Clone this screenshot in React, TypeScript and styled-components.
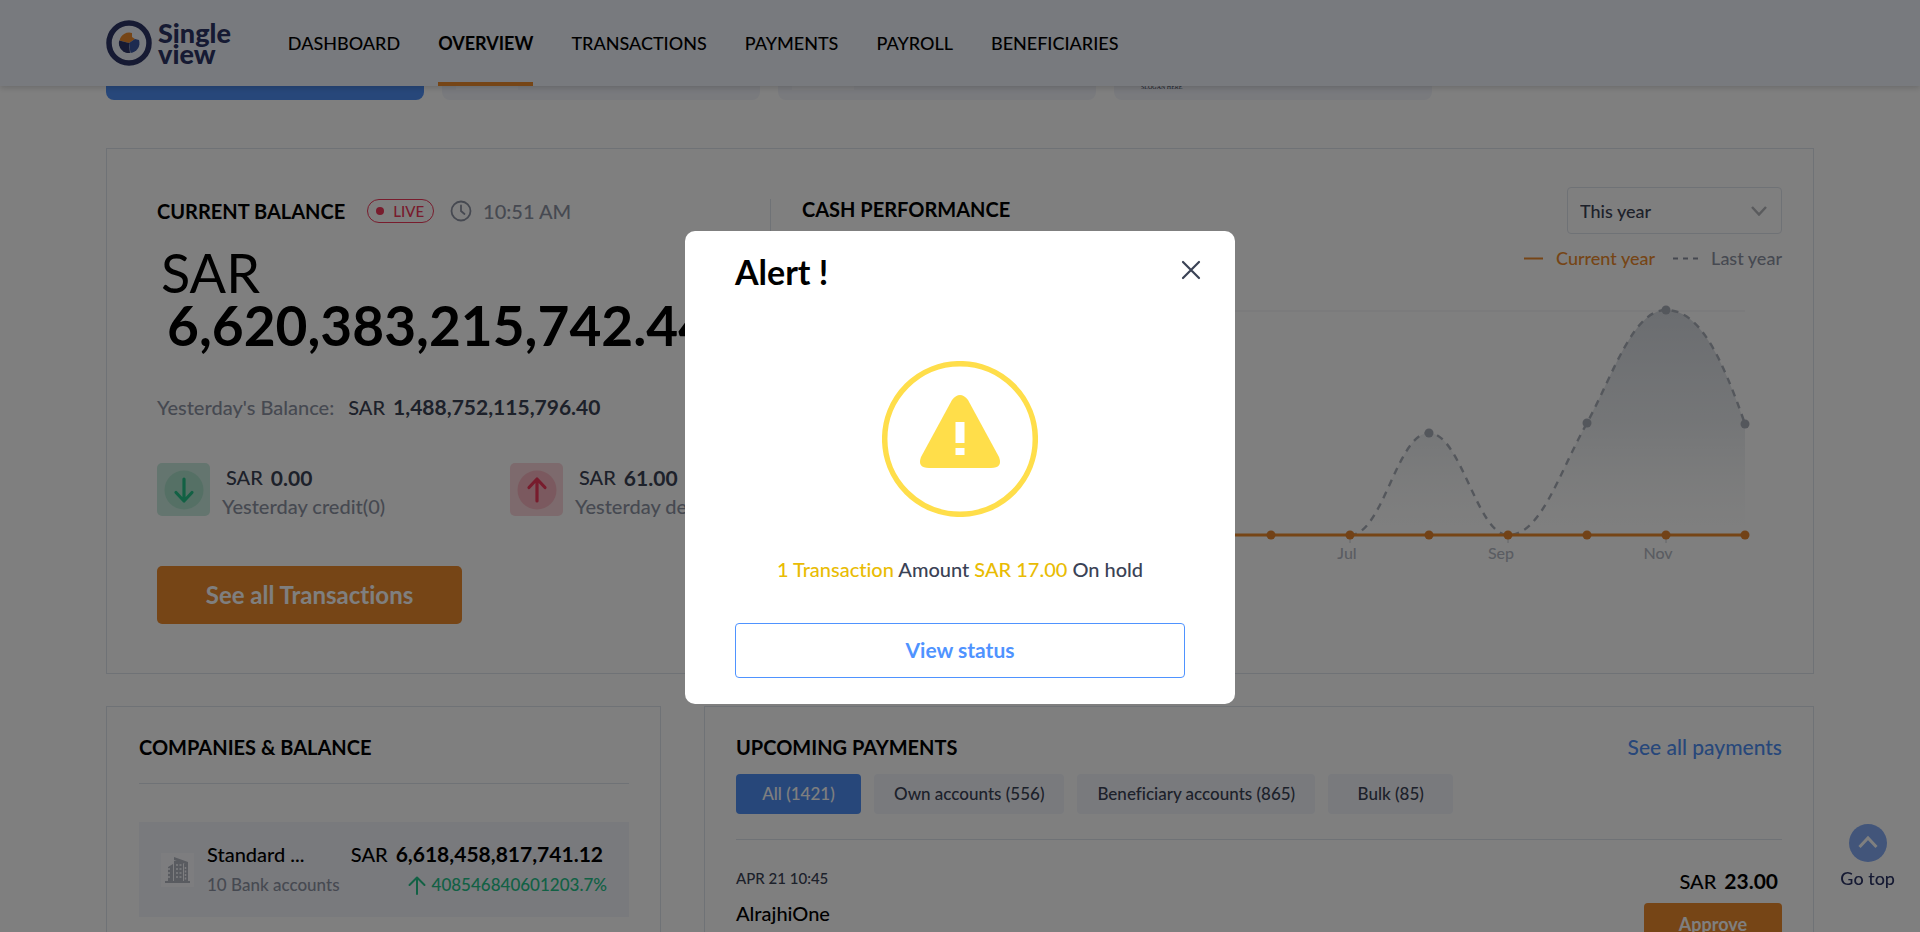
import React from 'react';
import styled, { createGlobalStyle } from 'styled-components';

const c = {
  ink: '#000000',
  slate: '#3a4255',
  muted: '#8d93a3',
  line: '#dfe4ec',
  tint: '#f2f4fb',
  blue: '#4f8ff5',
  orange: '#ec8a2d',
  green: '#25c289',
  red: '#f0385a',
  navy: '#2c3566',
};

const GlobalStyle = createGlobalStyle`
  *, *::before, *::after { box-sizing: border-box; }
  body {
    margin: 0;
    background: #fff;
    color: ${c.ink};
    font-family: Lato, "Liberation Sans", sans-serif;
    font-size: 20px;
    font-weight: 500;
    line-height: 24px;
    font-variant-ligatures: none;
  }
  h1, h2, p { margin: 0; }
  button, select { font: inherit; color: inherit; font-variant-ligatures: inherit; }
  button { cursor: pointer; }
  a { text-decoration: none; }
`;

const Header = styled.header`
  position: sticky;
  top: 0;
  z-index: 2;
  display: flex;
  align-items: center;
  gap: 57px;
  height: 86px;
  padding: 0 106px;
  background: #f1f5fc;
  box-shadow: 0 2px 6px rgba(0, 0, 0, 0.16);
`;

const Brand = styled.a`
  display: flex;
  align-items: center;
  gap: 6px;
  color: ${c.navy};
  font-size: 27px;
  font-weight: 900;
  line-height: 21px;
`;

const BrandName = styled.span`
  display: flex;
  flex-direction: column;
`;

const Nav = styled.nav`
  display: flex;
  gap: 38px;
  height: 100%;
`;

const NavLink = styled.a<{ $active?: boolean }>`
  display: flex;
  align-items: center;
  padding-top: 3px;
  color: ${c.ink};
  font-size: 18px;
  font-weight: ${(p) => (p.$active ? 700 : 500)};
  border-bottom: 4px solid ${(p) => (p.$active ? c.orange : 'transparent')};
`;

const Main = styled.main`
  margin-top: -18px;
  padding: 0 106px 60px;
`;

const CompanyStrip = styled.div`
  display: flex;
  gap: 18px;
`;

const CompanyCard = styled.div<{ $active?: boolean }>`
  width: 318px;
  height: 32px;
  padding: 0 14px;
  border-radius: 0 0 8px 8px;
  background: ${(p) => (p.$active ? c.blue : c.tint)};
`;

const CardLogo = styled.div`
  width: 62px;
  height: 22px;
  background: #f9fafe;
`;

const Slogan = styled.div`
  padding: 15px 13px 0;
  color: ${c.slate};
  font: 6px/8px "Liberation Serif", serif;
`;

const Panel = styled.section`
  border: 1px solid ${c.line};
`;

const BalancePanel = styled(Panel)`
  display: grid;
  grid-template-columns: 613px 1fr;
  margin-top: 48px;
  height: 526px;
`;

const BalanceColumn = styled.div`
  padding: 50px 0 0 50px;
  min-width: 0;
`;

const Title = styled.h2`
  font-size: 20px;
  line-height: 24px;
  font-weight: 700;
`;

const TitleRow = styled.div`
  display: flex;
  align-items: center;
  height: 24px;
`;

const Live = styled.span`
  display: flex;
  align-items: center;
  gap: 8px;
  height: 24px;
  margin: 0 16px 0 22px;
  padding: 0 9px 0 7px;
  border: 1px solid ${c.red};
  border-radius: 12px;
  color: ${c.red};
  font-size: 15px;
`;

const Time = styled.span`
  margin-left: 11px;
  color: ${c.muted};
`;

const Total = styled.p`
  display: flex;
  flex-direction: column;
  margin-top: 23px;
  padding-left: 4px;
  font-size: 54px;
  font-weight: 400;
  line-height: 53px;
`;

const TotalValue = styled.strong`
  padding-left: 6px;
  font-size: 55px;
  font-weight: 700;
`;

const Yesterday = styled.p`
  display: flex;
  gap: 14px;
  margin-top: 43px;
  color: ${c.slate};
`;

const Muted = styled.span`
  color: ${c.muted};
`;

const Movements = styled.div`
  display: grid;
  grid-template-columns: 353px 1fr;
  margin-top: 44px;
`;

const Movement = styled.div`
  display: flex;
  gap: 12px;
  line-height: 29px;
  color: ${c.slate};
  white-space: nowrap;
`;

const MovementIcon = styled.span<{ $color: string }>`
  display: grid;
  place-items: center;
  width: 53px;
  height: 53px;
  border-radius: 5px;
  background: ${(p) => p.$color};
`;

const Amount = styled.span`
  display: flex;
  gap: 8px;
  strong { font-size: 21px; font-weight: 700; }
`;

const MovementText = styled.div`
  display: flex;
  flex-direction: column;
  ${Amount} { padding-left: 4px; }
`;

const PrimaryButton = styled.button`
  width: 305px;
  height: 58px;
  margin-top: 45px;
  border: 0;
  border-radius: 5px;
  background: ${c.orange};
  color: #fff;
  font-size: 24px;
  font-weight: 700;
`;

const PerformanceColumn = styled.div`
  position: relative;
  margin-top: 50px;
  padding: 0 31px 0 82px;
`;

const Divider = styled.div`
  position: absolute;
  left: 50px;
  top: 0;
  height: 420px;
  border-left: 1px solid ${c.line};
`;

const PerformanceHead = styled.div`
  display: flex;
  justify-content: space-between;
  margin-top: -12px;
  ${Title} { padding-top: 10px; }
`;

const SelectBox = styled.label`
  display: grid;
  align-items: center;
  > * { grid-area: 1 / 1; }
  > svg { justify-self: end; margin-right: 15px; pointer-events: none; }
`;

const Select = styled.select`
  appearance: none;
  width: 215px;
  height: 47px;
  padding: 0 12px;
  border: 1px solid ${c.line};
  border-radius: 4px;
  background: transparent;
  color: ${c.slate};
  font-size: 18px;
`;

const Legend = styled.div`
  display: flex;
  justify-content: flex-end;
  align-items: center;
  gap: 18px;
  margin-top: 12px;
  font-size: 18px;
`;

const LegendItem = styled.span<{ $color: string }>`
  display: flex;
  align-items: center;
  gap: 13px;
  color: ${(p) => p.$color};
`;

const Chart = styled.svg`
  display: block;
  width: 100%;
  height: 280px;
  margin-top: 25px;
  font-size: 16px;
`;

const Columns = styled.div`
  display: grid;
  grid-template-columns: minmax(0, 1fr) minmax(0, 2fr);
  gap: 43px;
  margin-top: 32px;
`;

const Companies = styled(Panel)`
  padding: 28px 31px 60px 32px;
  ${Title} { margin-bottom: 24px; }
`;

const Rule = styled.hr`
  margin: 0;
  border: 0;
  border-top: 1px solid ${c.line};
`;

const CompanyRow = styled.div`
  display: flex;
  align-items: center;
  height: 95px;
  margin-top: 38px;
  padding: 0 22px;
  background: ${c.tint};
`;

const CompanyIcon = styled.span`
  display: grid;
  place-items: center;
  width: 33px;
  height: 34px;
  margin-right: 13px;
  background: #fafbff;
`;

const Stack = styled.div<{ $end?: boolean }>`
  display: flex;
  flex-direction: column;
  align-items: ${(p) => (p.$end ? 'flex-end' : 'flex-start')};
  gap: 7px;
  margin-left: ${(p) => (p.$end ? 'auto' : '0')};
  white-space: nowrap;
  ${Amount} { padding-right: 4px; }
`;

const Small = styled.span<{ $color: string }>`
  display: flex;
  align-items: center;
  gap: 6px;
  font-size: 17px;
  color: ${(p) => p.$color};
`;

const Upcoming = styled(Panel)`
  padding: 28px 31px 60px;
`;

const SpaceBetween = styled.div`
  display: flex;
  justify-content: space-between;
  align-items: flex-start;
`;

const TextLink = styled.a`
  color: ${c.blue};
  font-size: 21px;
`;

const Tabs = styled.div`
  display: flex;
  gap: 13px;
  margin: 15px 0 25px;
`;

const Tab = styled.button<{ $active?: boolean }>`
  min-width: 125px;
  height: 40px;
  padding: 0 20px;
  border: 0;
  border-radius: 4px;
  background: ${(p) => (p.$active ? c.blue : c.tint)};
  color: ${(p) => (p.$active ? '#fff' : c.slate)};
  font-size: 17px;
`;

const Payment = styled(SpaceBetween)`
  padding-top: 26px;
`;

const PaymentInfo = styled.div`
  display: flex;
  flex-direction: column;
  gap: 11px;
`;

const PaymentDate = styled.span`
  color: ${c.slate};
  font-size: 15px;
`;

const PaymentAction = styled.div`
  display: flex;
  flex-direction: column;
  align-items: flex-end;
  gap: 10px;
  padding-top: 3px;
  ${Amount} { padding-right: 4px; }
`;

const ApproveButton = styled.button`
  width: 138px;
  height: 42px;
  border: 0;
  border-radius: 4px;
  background: ${c.orange};
  color: #fff;
  font-size: 18px;
  font-weight: 700;
`;

const GoTop = styled.a`
  position: fixed;
  right: 25px;
  bottom: 42px;
  display: flex;
  flex-direction: column;
  align-items: center;
  gap: 4px;
  color: ${c.navy};
  font-size: 18px;
`;

const Overlay = styled.div`
  position: fixed;
  inset: 0;
  z-index: 3;
  display: grid;
  place-items: center;
  padding-top: 2px;
  background: rgba(0, 0, 0, 0.5);
`;

const Dialog = styled.div`
  display: flex;
  flex-direction: column;
  align-items: center;
  width: 550px;
  padding: 22px 50px 26px;
  border-radius: 10px;
  background: #fff;
`;

const DialogHead = styled.div`
  display: flex;
  justify-content: space-between;
  align-items: flex-start;
  align-self: stretch;
  margin-right: -23px;
`;

const DialogTitle = styled.h1`
  font-size: 34px;
  line-height: 38px;
  font-weight: 700;
`;

const CloseButton = styled.button`
  display: grid;
  padding: 5px;
  border: 0;
  background: none;
  color: ${c.slate};
`;

const WarningIcon = styled.svg`
  margin-top: 70px;
`;

const Message = styled.p`
  margin-top: 40px;
  color: ${c.slate};
`;

const Highlight = styled.span`
  color: #e9bc04;
`;

const OutlineButton = styled.button`
  align-self: stretch;
  height: 55px;
  margin-top: 42px;
  border: 1px solid #4f93ff;
  border-radius: 4px;
  background: #fff;
  color: #4f93ff;
  font-size: 21px;
  font-weight: 700;
`;

const UpArrow = () => (
  <svg width="18" height="19" viewBox="0 0 18 19" fill="none" stroke="currentColor" strokeWidth="2" strokeLinecap="round" strokeLinejoin="round" aria-hidden="true">
    <path d="M9 18V1.500M1.500 9L9 1.500L16.500 9" />
  </svg>
);

const MoveIcon = ({ up }: { up?: boolean }) => (
  <MovementIcon $color={up ? '#fad5da' : '#c8ebde'}>
    <svg width="40" height="42" viewBox="0 0 40 42" fill="none" strokeWidth="3.200" strokeLinecap="round" strokeLinejoin="round" aria-hidden="true">
      <circle cx="20" cy="21" r="19.500" fill={up ? '#f6b3be' : '#abe0cb'} />
      {up ? (
        <path stroke={c.red} d="M20 32V10M12 18.500L20 10l8 8.500" />
      ) : (
        <path stroke={c.green} d="M20 10v22M12 23.500L20 32l8-8.500" />
      )}
    </svg>
  </MovementIcon>
);

const Money = ({ value }: { value: string }) => (
  <Amount>
    <span>SAR</span>
    <strong>{value}</strong>
  </Amount>
);

const navItems = ['DASHBOARD', 'OVERVIEW', 'TRANSACTIONS', 'PAYMENTS', 'PAYROLL', 'BENEFICIARIES'];
const tabs = ['All (1421)', 'Own accounts (556)', 'Beneficiary accounts (865)', 'Bulk (85)'];

const STEP = 79;
const BASE = 240;
const months = Array.from({ length: 12 }, (_, i) => 75 + i * STEP);
const lastYear: [number, number][] = [[628, 138], [786, 128], [865, 15], [944, 129]];
const curve =
  'M549 240C582 240 596 138 628 138C660 138 676 240 707 240C740 240 757 180 786 128C812 80 832 15 865 15C898 15 920 60 944 129';

const CashChart = () => (
  <Chart viewBox="1 0 980 280" preserveAspectRatio="xMaxYMin meet" role="img" aria-label="Cash performance by month">
    <defs>
      <linearGradient id="area" gradientUnits="userSpaceOnUse" x1="0" y1="15" x2="0" y2="240">
        <stop offset="0" stopColor="#a4adbb" stopOpacity="0.45" />
        <stop offset="0.5" stopColor="#b6bfc9" stopOpacity="0.3" />
        <stop offset="1" stopColor="#d5dcdc" stopOpacity="0" />
      </linearGradient>
    </defs>
    <path d="M75 16H944" stroke="#eeeff1" />
    <path d={`${curve}V240H549Z`} fill="url(#area)" />
    <path d={curve} fill="none" stroke="#a9aeb8" strokeWidth="2.400" strokeDasharray="7 6" />
    {lastYear.map(([x, y]) => (
      <circle key={x} cx={x} cy={y} r="4.500" fill="#a9aeb8" />
    ))}
    <path d="M549 240v8M707 240v8M865 240v8" stroke="#c8ccd4" />
    <path d={`M75 ${BASE}H944`} stroke={c.orange} strokeWidth="3" />
    {months.map((x) => (
      <circle key={x} cx={x} cy={BASE} r="4.500" fill="#e4852f" />
    ))}
    <g fill="#b4b9c4" textAnchor="middle">
      <text x="546" y="264">Jul</text>
      <text x="700" y="264">Sep</text>
      <text x="857" y="264">Nov</text>
    </g>
  </Chart>
);

export default function App() {
  return (
    <>
      <GlobalStyle />
      <Header>
        <Brand href="#">
          <svg width="46" height="46" viewBox="0 0 46 46" aria-hidden="true">
            <circle cx="23" cy="23" r="20" fill="none" stroke={c.navy} strokeWidth="5.500" />
            <path d="M23 23L13.500 20.500A10 10 0 0 1 26 13V17L29 19Z" fill={c.orange} />
            <path d="M23 23L13.200 20.500A10 10 0 0 0 24 33Z" fill={c.navy} />
            <path d="M23 23L29 19L33 20A10 10 0 0 1 24.500 33Z" fill="#3a57a0" />
          </svg>
          <BrandName>
            <span>Single</span>
            <span>view</span>
          </BrandName>
        </Brand>
        <Nav>
          {navItems.map((item) => (
            <NavLink key={item} href="#" $active={item === 'OVERVIEW'}>
              {item}
            </NavLink>
          ))}
        </Nav>
      </Header>

      <Main>
        <CompanyStrip>
          <CompanyCard $active />
          <CompanyCard>
            <CardLogo />
          </CompanyCard>
          <CompanyCard>
            <CardLogo />
          </CompanyCard>
          <CompanyCard>
            <Slogan>SLOGAN HERE</Slogan>
          </CompanyCard>
        </CompanyStrip>

        <BalancePanel>
          <BalanceColumn>
            <TitleRow>
              <Title>CURRENT BALANCE</Title>
              <Live>
                <svg width="10" height="10" viewBox="0 0 10 10" aria-hidden="true">
                  <circle cx="5" cy="5" r="4" fill={c.red} />
                </svg>
                LIVE
              </Live>
              <svg width="22" height="22" viewBox="0 0 22 22" fill="none" stroke={c.muted} strokeWidth="1.800" strokeLinecap="round" aria-hidden="true">
                <circle cx="11" cy="11" r="9.500" />
                <path d="M11 5.500V11l3.500 3" />
              </svg>
              <Time>10:51 AM</Time>
            </TitleRow>
            <Total>
              <span>SAR</span>
              <TotalValue>6,620,383,215,742.44</TotalValue>
            </Total>
            <Yesterday>
              <Muted>Yesterday's Balance:</Muted>
              <Money value="1,488,752,115,796.40" />
            </Yesterday>
            <Movements>
              <Movement>
                <MoveIcon />
                <MovementText>
                  <Money value="0.00" />
                  <Muted>Yesterday credit(0)</Muted>
                </MovementText>
              </Movement>
              <Movement>
                <MoveIcon up />
                <MovementText>
                  <Money value="61.00" />
                  <Muted>Yesterday debit(1)</Muted>
                </MovementText>
              </Movement>
            </Movements>
            <PrimaryButton type="button">See all Transactions</PrimaryButton>
          </BalanceColumn>
          <PerformanceColumn>
            <Divider />
            <PerformanceHead>
              <Title>CASH PERFORMANCE</Title>
              <SelectBox>
                <Select aria-label="Period" defaultValue="This year">
                  <option>This year</option>
                </Select>
                <svg width="16" height="10" viewBox="0 0 16 10" fill="none" stroke="#b4b6bb" strokeWidth="2.500" aria-hidden="true">
                  <path d="M1 1l7 7.500L15 1" />
                </svg>
              </SelectBox>
            </PerformanceHead>
            <Legend>
              <LegendItem $color={c.orange}>
                <svg width="19" height="3" aria-hidden="true">
                  <path d="M0 1.500h19" stroke={c.orange} strokeWidth="2" />
                </svg>
                Current year
              </LegendItem>
              <LegendItem $color={c.muted}>
                <svg width="25" height="3" aria-hidden="true">
                  <path d="M0 1.500h25" stroke={c.muted} strokeWidth="2" strokeDasharray="5 5" />
                </svg>
                Last year
              </LegendItem>
            </Legend>
            <CashChart />
          </PerformanceColumn>
        </BalancePanel>

        <Columns>
          <Companies>
            <Title>COMPANIES &amp; BALANCE</Title>
            <Rule />
            <CompanyRow>
              <CompanyIcon>
                <svg width="25" height="26" viewBox="0 0 25 26" fill="#b2b6c0" aria-hidden="true">
                  <path d="M0 24h25v2H0zM3 10l5-3v17H3zM9 4h9v20H9zM19 7h4v17h-4zM9 0l14 5v3L9 3z" />
                  <path d="M3 12h3M3 16h3M3 20h3M11 8h6M11 12h6M11 16h6M11 20h6M20.500 10v13" stroke="#fafbff" strokeWidth="1.500" strokeDasharray="2 1.500" />
                </svg>
              </CompanyIcon>
              <Stack>
                <span>Standard ...</span>
                <Small $color={c.muted}>10 Bank accounts</Small>
              </Stack>
              <Stack $end>
                <Money value="6,618,458,817,741.12" />
                <Small $color={c.green}>
                  <UpArrow />
                  408546840601203.7%
                </Small>
              </Stack>
            </CompanyRow>
          </Companies>

          <Upcoming>
            <SpaceBetween>
              <Title>UPCOMING PAYMENTS</Title>
              <TextLink href="#">See all payments</TextLink>
            </SpaceBetween>
            <Tabs>
              {tabs.map((label, i) => (
                <Tab key={label} type="button" $active={i === 0}>
                  {label}
                </Tab>
              ))}
            </Tabs>
            <Rule />
            <Payment>
              <PaymentInfo>
                <PaymentDate>APR 21 10:45</PaymentDate>
                <span>AlrajhiOne</span>
              </PaymentInfo>
              <PaymentAction>
                <Money value="23.00" />
                <ApproveButton type="button">Approve</ApproveButton>
              </PaymentAction>
            </Payment>
          </Upcoming>
        </Columns>
      </Main>

      <GoTop href="#">
        <svg width="38" height="38" viewBox="0 0 38 38" fill="none" aria-hidden="true">
          <circle cx="19" cy="19" r="19" fill="#84abf5" />
          <path d="M10.500 23L19 14l8.500 9" stroke="#fff" strokeWidth="3" />
        </svg>
        Go top
      </GoTop>

      <Overlay>
        <Dialog role="dialog" aria-modal="true" aria-labelledby="alert-title">
          <DialogHead>
            <DialogTitle id="alert-title">Alert !</DialogTitle>
            <CloseButton type="button" aria-label="Close">
              <svg width="24" height="24" viewBox="0 0 24 24" fill="none" stroke="currentColor" strokeWidth="2.200" strokeLinecap="round" aria-hidden="true">
                <path d="M4 4l16 16M20 4L4 20" />
              </svg>
            </CloseButton>
          </DialogHead>
          <WarningIcon width="156" height="156" viewBox="0 0 156 156" aria-hidden="true">
            <circle cx="78" cy="78" r="75.300" fill="none" stroke="#ffde4a" strokeWidth="5.500" />
            <path d="M70 39Q78 29 86 39L117 96Q121 107 109 107H47Q35 107 39 96Z" fill="#ffde4a" />
            <path d="M73.500 61h9v21h-9zM73.500 87h9v7h-9z" fill="#fff" />
          </WarningIcon>
          <Message>
            <Highlight>1 Transaction</Highlight> Amount <Highlight>SAR 17.00</Highlight> On hold
          </Message>
          <OutlineButton type="button">View status</OutlineButton>
        </Dialog>
      </Overlay>
    </>
  );
}
